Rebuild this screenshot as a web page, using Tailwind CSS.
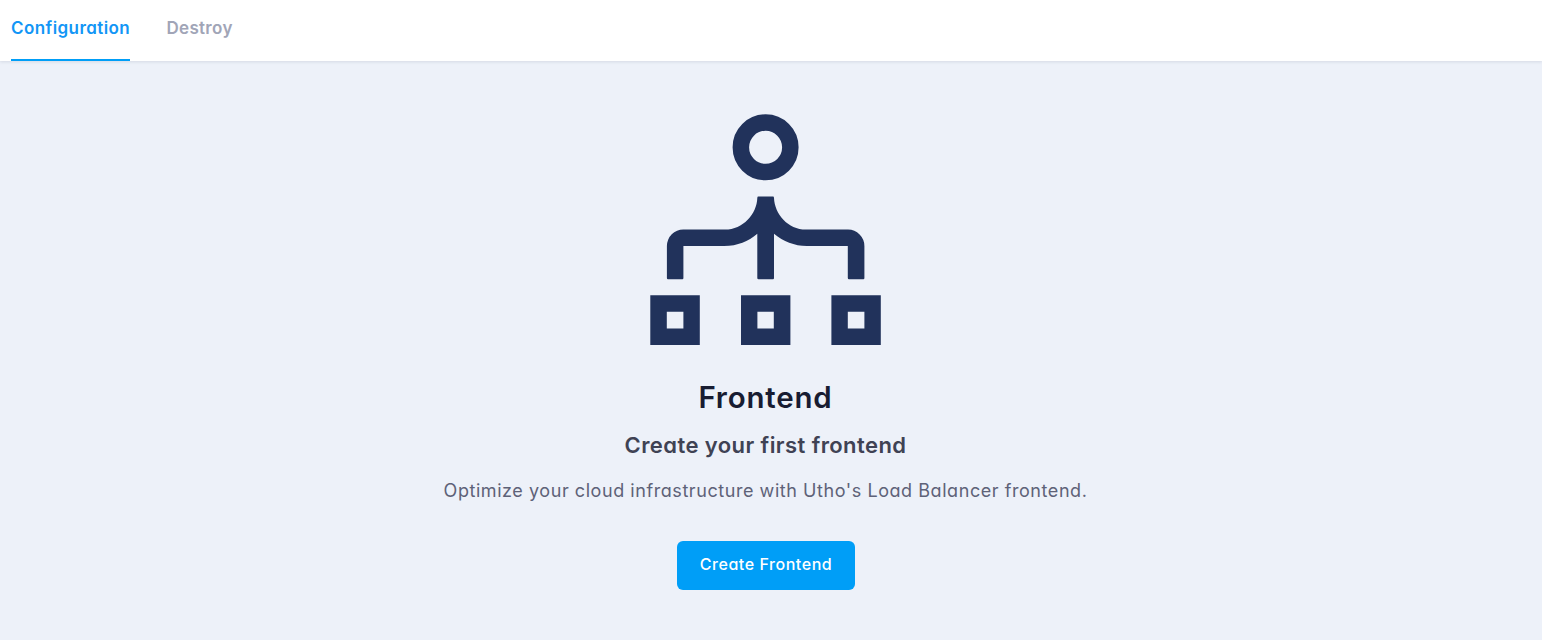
<!DOCTYPE html>
<html lang="en">
<head>
<meta charset="utf-8">
<title>Load Balancer</title>
<script src="https://cdn.jsdelivr.net/npm/@tailwindcss/browser@4"></script>
</head>
<body class="bg-[#edf1f9] h-screen overflow-hidden flex flex-col font-['Inter',sans-serif] [font-feature-settings:'cv11']">
<nav class="flex h-[61px] shrink-0 gap-[36.5px] bg-white pl-[11px] text-[17px] font-semibold leading-[56px] shadow-[0_1px_3px_rgba(40,50,80,0.12)]">
  <a class="h-[61px] w-[119px] whitespace-nowrap border-b-2 border-[#009ef7] text-[#1296f6] tracking-[0.42px]">Configuration</a>
  <a class="whitespace-nowrap text-[#a1a5b7] tracking-[0.3px]">Destroy</a>
</nav>
<main class="flex w-[1531px] flex-col items-center pt-[53px] text-center whitespace-nowrap">
  <svg class="block h-[232px] w-[232px]" viewBox="650 114 232 232" fill="#21325b">
    <circle cx="765.6" cy="147.3" r="24.75" fill="none" stroke="#21325b" stroke-width="16.5"/>
    <path d="M758.3 196.6H773Q774 196.6 774 198C774.6 214 788 229.6 806 229.6H848A16.4 16.4 0 0 1 864.4 246V278Q864.4 279.2 863.4 279.2H849Q847.8 279.2 847.8 278V246H807C794 246 783.5 241.5 774 233.8V278Q774 279.2 773 279.2H758.5Q757.3 279.2 757.3 278V233.8C748 241.5 738 246 724 246H683.4V278Q683.4 279.2 682.4 279.2H668Q666.9 279.2 666.9 278V246A16.4 16.4 0 0 1 683.4 229.6H725C743 229.6 756.8 214 757.3 198Q757.3 196.6 758.3 196.6Z"/>
    <path fill-rule="evenodd" d="M650.3 295.3H699.8V345H650.3ZM666.8 311.8V328.4H683.4V311.8ZM741 295.3H790.4V345H741ZM757.4 311.8V328.4H773.8V311.8ZM831.4 295.3H880.8V345H831.4ZM847.8 311.8V328.4H864.4V311.8Z"/>
  </svg>
  <h1 class="mt-[33px] text-[29.5px] font-semibold leading-[36px] tracking-[0.8px] text-[#181c32]">Frontend</h1>
  <h2 class="mt-[14px] text-[22px] font-semibold leading-[32px] tracking-[0.42px] text-[#3f4254]">Create your first frontend</h2>
  <p class="mt-[16px] text-[18px] leading-[28px] tracking-[0.56px] text-[#5e6278]">Optimize your cloud infrastructure with Utho's Load Balancer frontend.</p>
  <button class="mt-[36px] ml-[1px] h-[49px] w-[178px] rounded-[6px] bg-[#009ef7] pb-[3px] text-[16px] font-medium tracking-[0.55px] text-white">Create Frontend</button>
</main>
</body>
</html>
